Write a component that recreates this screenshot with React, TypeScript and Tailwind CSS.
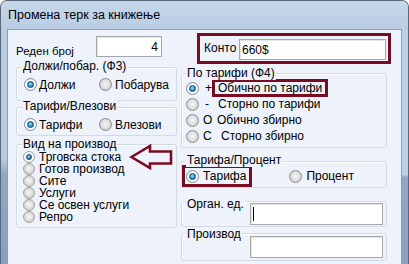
import React from 'react';

const Radio: React.FC<{ checked?: boolean; small?: boolean }> = ({ checked = false, small = false }) => (
  <span
    className={`flex shrink-0 items-center justify-center rounded-full border ${
      small ? 'h-[12px] w-[12px] border-[#a3a3a3]' : 'h-[13px] w-[13px] border-[#8b8c8d]'
    } ${
      checked
        ? 'bg-[radial-gradient(circle,#ffffff_50%,#d9d9d9_100%)]'
        : 'bg-[radial-gradient(circle_at_50%_45%,#f6f6f6_0%,#dcdcdc_55%,#b8b8b8_100%)]'
    }`}
  >
    {checked && (
      <span
        className={`rounded-full border border-[#12466f] bg-[radial-gradient(circle_at_45%_40%,#b2e8ff_0%,#3d9cd8_45%,#0d4a7c_100%)] ${
          small ? 'h-[6px] w-[6px]' : 'h-[7px] w-[7px]'
        }`}
      />
    )}
  </span>
);

const Group: React.FC<{ label: string; className?: string; labelClass?: string; children?: React.ReactNode }> = ({
  label,
  className = '',
  labelClass = '-top-[9px] left-[5px]',
  children,
}) => (
  <div className={`relative rounded-[3px] border border-[#d2dae3] shadow-[inset_1px_1px_0_#ffffff] ${className}`}>
    <span className={`absolute bg-[#edf2fb] px-[1px] leading-[14px] whitespace-nowrap ${labelClass}`}>{label}</span>
    {children}
  </div>
);

const TextBox: React.FC<{ className?: string; children?: React.ReactNode }> = ({ className = '', children }) => (
  <div className={`flex items-center border border-[#a4a8ad] bg-white shadow-[inset_1px_1px_0_#e4e7ea] ${className}`}>
    {children}
  </div>
);

const products = ['Трговска стока', 'Готов производ', 'Сите', 'Услуги', 'Се освен услуги', 'Репро'];

export default function App() {
  return (
    <div className="flex h-[264px] w-[409px] flex-col overflow-hidden rounded-t-[7px] border-x border-t border-[#59687a] bg-[#c0d3e7] font-['Liberation_Sans',Arial,sans-serif] text-[12px] text-black">
      {/* title bar */}
      <div className="flex h-[28px] shrink-0 items-center bg-[linear-gradient(to_bottom,#c6d7ea,#bacde3)] pl-[7px] text-[12.5px]">
        Промена терк за книжење
      </div>

      <div className="flex flex-1">
        <div className="w-[6px] shrink-0 bg-[linear-gradient(to_bottom,#bacde3_0%,#b8cbe1_55%,#8ea8c6_62%,#86a0bf_100%)]" />

        {/* client area */}
        <div className="flex flex-1 border-l border-t border-[#8d9fb4] bg-[#edf2fb]">
          {/* left column */}
          <div className="ml-[8px] flex w-[161px] shrink-0 flex-col">
            <div className="mt-[6px] flex h-[21px]">
              <span className="w-[80px] pt-[9px] text-[11.5px] leading-[13px]">Реден број</span>
              <TextBox className="h-[21px] w-[66px] justify-end pr-[3px]">4</TextBox>
            </div>

            <Group label="Должи/побар. (Ф3)" className="mt-[10px] h-[34px] pl-[7px] pt-[10px]">
              <div className="flex h-[13px] items-center">
                <span className="flex w-[75px] items-center">
                  <Radio checked />
                  <span className="ml-[2px]">Должи</span>
                </span>
                <Radio />
                <span className="ml-[3px]">Побарува</span>
              </div>
            </Group>

            <Group label="Тарифи/Влезови" className="mt-[6px] h-[29px] pl-[7px] pt-[10px]">
              <div className="flex h-[13px] items-center">
                <span className="flex w-[75px] items-center">
                  <Radio checked />
                  <span className="ml-[2px]">Тарифи</span>
                </span>
                <Radio />
                <span className="ml-[3px]">Влезови</span>
              </div>
            </Group>

            <Group label="Вид на производ" className="mt-[8px] h-[84px] pl-[6px] pt-[6px]" labelClass="-top-[8px] left-[5px]">
              {products.map((p, i) => (
                <div key={p} className="flex h-[12px] items-center leading-[12px]">
                  <Radio small checked={i === 0} />
                  <span className="ml-[4px]">{p}</span>
                </div>
              ))}
              <svg className="absolute left-[112px] -top-[1px]" width="44" height="26" viewBox="0 0 44 26">
                <polygon
                  points="2.5,13 21,2 21,7.5 42,7.5 42,19.5 21,19.5 21,24"
                  fill="none"
                  stroke="#7a0b20"
                  strokeWidth="2.6"
                  strokeLinejoin="miter"
                />
              </svg>
            </Group>
          </div>

          {/* right column */}
          <div className="ml-[4px] flex w-[206px] shrink-0 flex-col">
            <div className="ml-[16px] mt-[3px] flex h-[31px] w-[194px] shrink-0 border-[3px] border-[#7a0b20] pl-[4px] pt-[3px]">
              <span className="mt-[3px] w-[35px] leading-[13px]">Конто</span>
              <TextBox className="h-[21px] w-[147px] pl-[2px]">660$</TextBox>
            </div>

            <Group label="По тарифи (Ф4)" className="mt-[9px] h-[75px] pl-[4px] pt-[6px]" labelClass="-top-[8px] left-[4px]">
              <div className="flex h-[16px] items-center">
                <Radio checked />
                <span className="ml-[6px] w-[7px]">+</span>
                <span className="flex h-[18px] items-center border-[3px] border-[#7a0b20] px-[3px]">Обично по тарифи</span>
              </div>
              <div className="flex h-[16px] items-center">
                <Radio />
                <span className="ml-[6px] w-[7px]">-</span>
                <span className="flex h-[18px] items-center border-[3px] border-transparent px-[3px]">Сторно по тарифи</span>
              </div>
              <div className="flex h-[16px] items-center">
                <Radio />
                <span className="ml-[4px] w-[14px]">O</span>
                <span>Обично збирно</span>
              </div>
              <div className="flex h-[16px] items-center">
                <Radio />
                <span className="ml-[4px] w-[18px]">C</span>
                <span>Сторно збирно</span>
              </div>
            </Group>

            <Group label="Тарифа/Процент" className="mt-[13px] h-[27px] pt-[3px]" labelClass="-top-[9px] left-[4px]">
              <div className="flex items-center">
                <span className="flex h-[22px] items-center border-[3px] border-[#7a0b20] pl-[1px] pr-[3px]">
                  <Radio checked />
                  <span className="ml-[4px]">Тарифа</span>
                </span>
                <span className="ml-[37px]">
                  <Radio />
                </span>
                <span className="ml-[4px]">Процент</span>
              </div>
            </Group>

            <Group label="Орган. ед." className="mt-[13px] flex h-[26px] justify-end pr-[3px] pt-[1px]" labelClass="-top-[5px] left-[4px]">
              <TextBox className="h-[22px] w-[133px] pl-[2px]">
                <span className="h-[14px] w-[1px] bg-black" />
              </TextBox>
            </Group>

            <Group label="Производ" className="mt-[6px] flex h-[28px] justify-end pr-[3px] pt-[2px]" labelClass="-top-[7px] left-[4px]">
              <TextBox className="h-[22px] w-[133px]" />
            </Group>
          </div>
        </div>

        <div className="w-[7px] shrink-0 border-l border-[#8d9fb4] bg-[linear-gradient(to_bottom,#bccfe4_0%,#bccfe4_62%,#8fa9c7_63%,#87a2c1_100%)]" />
      </div>
    </div>
  );
}
